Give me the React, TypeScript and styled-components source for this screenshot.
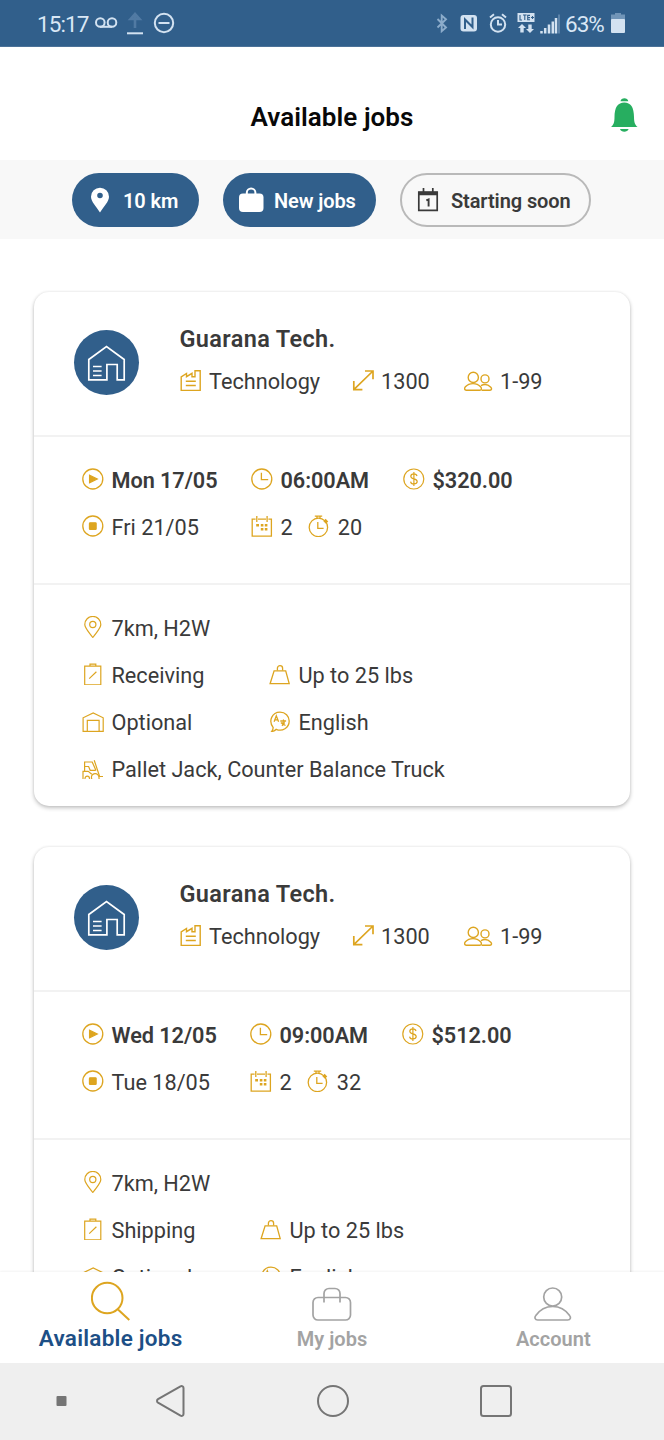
import React from 'react';
import styled, { createGlobalStyle } from 'styled-components';

const BLUE = '#315f8b';
const GOLD = '#dda520';

const GlobalStyle = createGlobalStyle`
  * { box-sizing: border-box; }
  body {
    margin: 0;
    background: #fff;
    font-family: Roboto, 'Liberation Sans', sans-serif;
    color: #3a3a3a;
  }
`;

const Screen = styled.div`
  width: 664px;
  height: 1440px;
  display: flex;
  flex-direction: column;
  overflow: hidden;
  background: #fff;
`;

const StatusBar = styled.div`
  flex: none;
  height: 47px;
  padding: 0 39px 0 37px;
  display: flex;
  align-items: center;
  justify-content: space-between;
  background: ${BLUE};
  border-bottom: 1px solid #4c7298;
  color: #d9e7f5;
  font-size: 22.5px;
`;

const StatusGroup = styled.div`
  display: flex;
  align-items: center;
  height: 46px;
`;

const StatusText = styled.span<{ $w: number; $indent?: number; $ls?: number }>`
  width: ${(p) => p.$w}px;
  line-height: 26px;
  letter-spacing: ${(p) => p.$ls ?? 0}px;
  white-space: nowrap;
  padding: 2px 0 0 ${(p) => p.$indent ?? 0}px;
`;

const Header = styled.header`
  flex: none;
  height: 113px;
  display: grid;
  grid-template-columns: 1fr auto 1fr;
  align-items: center;
  padding: 24px 25px 0 25px;
`;

const Title = styled.h1`
  grid-column: 2;
  margin: 2px 0 0;
  color: #080808;
  font-size: 26px;
  font-weight: 600;
  line-height: 32px;
  letter-spacing: 0.05px;
`;

const BellButton = styled.button`
  justify-self: end;
  border: 0;
  padding: 0;
  margin-bottom: 3px;
  background: none;
  height: 38px;
`;

const Filters = styled.div`
  flex: none;
  height: 79px;
  display: flex;
  justify-content: center;
  align-items: center;
  gap: 24px;
  padding-right: 1px;
  background: #f8f8f8;
`;

const Chip = styled.button<{ $w: number; $gap: number; $outline?: boolean }>`
  width: ${(p) => p.$w}px;
  height: 54px;
  padding: 0 0 0 ${(p) => (p.$outline ? 15 : 14)}px;
  display: flex;
  align-items: center;
  gap: ${(p) => p.$gap}px;
  border: ${(p) => (p.$outline ? '2px solid #b9b9b9' : '0')};
  border-radius: 27px;
  background: ${(p) => (p.$outline ? 'transparent' : BLUE)};
  color: ${(p) => (p.$outline ? '#3a3a3a' : '#fff')};
  font: 600 20px Roboto, sans-serif;
  letter-spacing: -0.1px;
  white-space: nowrap;
`;

const ChipLabel = styled.span`
  padding-top: 3px;
`;

const List = styled.main`
  flex: 1;
  min-height: 0;
  overflow: hidden;
  padding: 53px 34px 0;
  display: flex;
  flex-direction: column;
  gap: 41px;
`;

const Card = styled.article`
  flex: none;
  height: 514px;
  border-radius: 15px;
  background: #fff;
  box-shadow: 0 2px 4px rgba(0, 0, 0, 0.24), 0 0 3px rgba(0, 0, 0, 0.08);
`;

const Company = styled.section`
  height: 145px;
  display: flex;
  padding: 32px 0 0 40px;
  border-bottom: 2px solid #f2f2f2;
`;

const Avatar = styled.div`
  width: 65px;
  height: 65px;
  margin: 6px 40.5px 0 0;
  border-radius: 50%;
  background: ${BLUE};
`;

const CompanyName = styled.h2`
  margin: 0;
  font-size: 23.5px;
  font-weight: 600;
  line-height: 30px;
  letter-spacing: 0.35px;
`;

const Facts = styled.div<{ $cols: string }>`
  display: grid;
  grid-template-columns: ${(p) => p.$cols};
  grid-auto-rows: 47px;
`;

const CompanyFacts = styled(Facts)`
  margin-top: 4px;
`;

const Schedule = styled.section`
  height: 148px;
  padding: 20px 0 0 48px;
  border-bottom: 2px solid #f2f2f2;
`;

const Details = styled.section`
  padding: 20px 0 0 48px;
`;

const Fact = styled.div<{ $bold?: boolean; $span?: boolean }>`
  display: flex;
  align-items: center;
  gap: 7.5px;
  font-size: 21.7px;
  font-weight: ${(p) => (p.$bold ? 600 : 390)};
  letter-spacing: ${(p) => (p.$bold ? -0.06 : 0)}px;
  white-space: nowrap;
  ${(p) => p.$span && 'grid-column: 1 / -1;'}
  svg {
    margin-bottom: 3px;
  }
`;

const Pair = styled.div`
  display: flex;
  gap: 15.5px;
`;

const TabBar = styled.nav`
  flex: none;
  height: 91px;
  display: grid;
  grid-template-columns: repeat(3, 1fr);
  background: #fff;
  box-shadow: 0 -1px 2px rgba(0, 0, 0, 0.05);
  position: relative;
`;

const Tab = styled.button<{ $active?: boolean }>`
  border: 0;
  padding: ${(p) => (p.$active ? 9 : 8.5)}px 0 0;
  background: none;
  display: flex;
  flex-direction: column;
  align-items: center;
  gap: ${(p) => (p.$active ? 4 : 5.5)}px;
  color: ${(p) => (p.$active ? '#1d4f86' : '#a3a3a3')};
  font: 600 ${(p) => (p.$active ? 22.5 : 20)}px/26px Roboto, sans-serif;
  letter-spacing: ${(p) => (p.$active ? 0.25 : 0)}px;
`;

const SystemNav = styled.div`
  flex: none;
  height: 77px;
  background: #efefef;
  display: flex;
  align-items: center;
  padding: 0 0 1px 56px;
`;

const NavKey = styled.span<{ $gap: number }>`
  display: flex;
  margin-right: ${(p) => p.$gap}px;
`;

type GlyphProps = { w?: number; h?: number; stroke?: string; sw?: number; ml?: number; children: React.ReactNode };

const Svg = styled.svg<{ $ml: number }>`
  flex: none;
  display: block;
  margin-left: ${(p) => p.$ml}px;
`;

const Glyph = ({ w = 22, h = 22, stroke = GOLD, sw = 1.3, ml = 0, children }: GlyphProps) => (
  <Svg $ml={ml} width={w} height={h} viewBox={`0 0 ${w} ${h}`} fill="none" stroke={stroke} strokeWidth={sw}>
    {children}
  </Svg>
);

const FactoryIcon = () => (
  <Glyph sw={1.4}>
    <path d="M1.2 21.500V7.900L6.500 4.500v3.200L12 4.300v3.400h3V1.800h5.200V21.500z" />
    <path d="M5.800 12.300h10M5.800 16.500h10" />
  </Glyph>
);
const ExpandIcon = () => (
  <Glyph sw={1.7}>
    <path d="M1.8 20.600 21 2M13 2h8v8.200M1.800 12v8.600h8.600" />
  </Glyph>
);
const PeopleIcon = () => (
  <Glyph w={30} sw={1.4}>
    <circle cx="10.300" cy="8.400" r="5.100" />
    <path d="M3.300 21.200h13.400c2 0 2.200-2 .9-3.400-3.800-4.200-11.400-4.200-15.200 0-1.300 1.400-1 3.400.9 3.400z" />
    <circle cx="22" cy="9.900" r="4" />
    <path d="M18.600 21.200h8.400c1.800 0 2-1.800.8-3-2.600-2.600-6.600-3.300-9.800-1.600" />
  </Glyph>
);
const PlayIcon = () => (
  <Glyph>
    <circle cx="10.800" cy="11" r="10" />
    <path d="M7.600 7.200v7.600l7.600-3.800z" fill={GOLD} />
  </Glyph>
);
const StopIcon = () => (
  <Glyph>
    <circle cx="10.800" cy="11" r="10" />
    <rect x="7.500" y="7.800" width="6.600" height="6.600" rx="0.600" fill={GOLD} />
  </Glyph>
);
const ClockIcon = () => (
  <Glyph>
    <circle cx="10.800" cy="11" r="10" />
    <path d="M10.400 4.800v6.900h6.800" />
  </Glyph>
);
const MoneyIcon = () => (
  <Glyph sw={1.2}>
    <circle cx="10.800" cy="11" r="10" />
    <path d="M14 8c-.3-1.400-1.500-2.100-3.100-2.100-1.800 0-3.100.9-3.100 2.400 0 3.500 6.400 1.800 6.400 5.300 0 1.500-1.400 2.400-3.300 2.400-2 0-3.100-.8-3.300-2.400M10.900 4v14" />
  </Glyph>
);
const CalendarIcon = () => (
  <Glyph>
    <path d="M4.600 4.200H1.200v17h19.200v-17h-3M7 4.200h8M5.800 1v6M16.100 1v6" />
    <path d="M5.200 10.200h2.800M9.800 10.200h2.600M13.800 10.200h2.600M9.800 14.200h2.600M13.800 14.200h2.600" strokeWidth="2.600" />
  </Glyph>
);
const StopwatchIcon = () => (
  <Glyph>
    <circle cx="10.400" cy="12.400" r="9.200" />
    <path d="M6.800 1.200h7.400M9 1.200v2M12 1.200v2M9.800 7v6.300h5.800" />
    <path d="m16.500 5 2.600 2.600" strokeWidth="3.200" />
  </Glyph>
);
const PinIcon = () => (
  <Glyph sw={1.2}>
    <path d="M10.800 21.500C6.500 15.500 2.800 12 2.800 8.400a8 8 0 0 1 16 0c0 3.600-3.700 7.100-8 13.100z" />
    <circle cx="10.800" cy="8.500" r="3.100" />
  </Glyph>
);
const ClipboardIcon = () => (
  <Glyph sw={1.2}>
    <path d="M2.700 3.200h16.100v18.600H2.700zM8 3V1.200h5.800V3M7.200 15.600l7.200-6.800" />
  </Glyph>
);
const WeightIcon = () => (
  <Glyph>
    <path d="M5.100 7.800h11.600L20.200 20.700H1.100z" />
    <path d="M8.400 7.600V5.200a2.600 2.600 0 0 1 5.200 0v2.400" />
  </Glyph>
);
const WarehouseIcon = () => (
  <Glyph sw={1.2}>
    <path d="M1.100 21.400V7.800L11.200 3l10 4.800v13.600h-4.100V10.400H5.300v11z" />
    <path d="M5.300 21.400h11.800" />
  </Glyph>
);
const LanguageIcon = () => (
  <Glyph>
    <path d="M4.200 17.600C-1 11 3.100 2.100 11 2.100c5.300 0 9.200 4 9.200 9 0 6.800-7 10.900-13 8.200-1 1.100-2.500 2-4.600 2.300 1-1.200 1.600-2.600 1.600-4z" />
    <path d="m5.100 11.800 2.200-6 2.300 6M5.900 9.800h3M11.300 11h5.800M11.800 13h4M14.300 9.500c1.700 2.800.8 5.100-1.500 6.200M13 13.500l3.500 2" />
  </Glyph>
);
const ForkliftIcon = () => (
  <Glyph sw={1.2}>
    <path d="M2.600 14V5h7.600l3.800 8.600M1 22v-7.600h5.200l3.600 2.800M2.600 9.500h4l1.600 3.800h5.500" />
    <path d="M12.200 3.200 17.600 19.500H21" />
    <path d="M3 22.200c-.3-4 4.600-4 4.600 0M9.800 22.200c-2.400-6.800 8.200-8.200 7.200 0" />
  </Glyph>
);

const BuildingIcon = () => (
  <Glyph w={65} h={65} stroke="#fff" sw={1.7}>
    <path d="M14.800 49.800V29.500L32.500 16.500l17.700 13v20.300h-7V34.500H32.900v15.300z" />
    <path d="M19 36.500h8.600M19 41h8.600M19 45.500h8.600" />
  </Glyph>
);

const BellIcon = () => (
  <Glyph w={30} h={38} stroke="none">
    <path d="M11.500 6.300C11.800 2.100 19 2.100 19.300 6.300M11 34c1 3.600 7.600 3.600 8.600 0z" fill="#27ae60" />
    <path d="M2 32.100c2.600-2.300 3.500-4.700 3.500-10C5.500 12 9 7.400 15.300 7.400S25 12 25 22.100c0 5.300 1 7.700 3.600 10z" fill="#27ae60" />
  </Glyph>
);

type Job = {
  scheduleCols: string;
  detailCols: string;
  start: string;
  end: string;
  time: string;
  pay: string;
  days: string;
  hours: string;
  task: string;
};

const jobs: Job[] = [
  { scheduleCols: '169px 152px 1fr', detailCols: '187px 1fr', start: 'Mon 17/05', end: 'Fri 21/05', time: '06:00AM', pay: '$320.00', days: '2', hours: '20', task: 'Receiving' },
  { scheduleCols: '168px 152px 1fr', detailCols: '178px 1fr', start: 'Wed 12/05', end: 'Tue 18/05', time: '09:00AM', pay: '$512.00', days: '2', hours: '32', task: 'Shipping' },
];

const JobCard = ({ job }: { job: Job }) => (
  <Card>
    <Company>
      <Avatar><BuildingIcon /></Avatar>
      <div>
        <CompanyName>Guarana Tech.</CompanyName>
        <CompanyFacts $cols="172px 111px auto">
          <Fact><FactoryIcon />Technology</Fact>
          <Fact><ExpandIcon />1300</Fact>
          <Fact><PeopleIcon />1-99</Fact>
        </CompanyFacts>
      </div>
    </Company>
    <Schedule>
      <Facts $cols={job.scheduleCols}>
        <Fact $bold><PlayIcon />{job.start}</Fact>
        <Fact $bold><ClockIcon />{job.time}</Fact>
        <Fact $bold><MoneyIcon />{job.pay}</Fact>
        <Fact><StopIcon />{job.end}</Fact>
        <Pair>
          <Fact><CalendarIcon />{job.days}</Fact>
          <Fact><StopwatchIcon />{job.hours}</Fact>
        </Pair>
      </Facts>
    </Schedule>
    <Details>
      <Facts $cols={job.detailCols}>
        <Fact $span><PinIcon />7km, H2W</Fact>
        <Fact><ClipboardIcon />{job.task}</Fact>
        <Fact><WeightIcon />Up to 25 lbs</Fact>
        <Fact><WarehouseIcon />Optional</Fact>
        <Fact><LanguageIcon />English</Fact>
        <Fact $span><ForkliftIcon />Pallet Jack, Counter Balance Truck</Fact>
      </Facts>
    </Details>
  </Card>
);

const PALE = '#d3e2f1';

const App = () => (
  <>
    <GlobalStyle />
    <Screen>
      <StatusBar>
        <StatusGroup>
          <StatusText $w={57} $ls={-0.9}>15:17</StatusText>
          <Glyph w={24} h={22} stroke={PALE} sw={2}>
            <circle cx="6.300" cy="10.500" r="4.300" /><circle cx="18" cy="10.500" r="4.300" /><path d="M6 14.800h12" />
          </Glyph>
          <Glyph w={18} h={24} stroke={PALE} sw={2} ml={8}>
            <path d="M1 22.300h16" />
            <path d="M9 17V5M4.500 8 9 3l4.500 5z" stroke="#517aa3" strokeWidth="2.600" />
          </Glyph>
          <Glyph w={22} h={22} stroke={PALE} sw={2} ml={9}>
            <circle cx="11" cy="11" r="9.200" /><path d="M5.500 11h11" />
          </Glyph>
        </StatusGroup>
        <StatusGroup>
          <Glyph w={12} h={20} stroke="#8caccb" sw={1.9}>
            <path d="m1.500 6 8.500 8.500-4.300 3.700V2.500L10 6.200 1.500 14.500" />
          </Glyph>
          <Glyph w={18} h={18} stroke={BLUE} sw={2} ml={12}>
            <rect x="0.500" y="1" width="16.500" height="16.500" rx="3" fill={PALE} stroke="none" />
            <path d="M5 15V5.500l7.500 7.500V3.500" />
          </Glyph>
          <Glyph w={20} h={22} stroke={PALE} sw={2} ml={10}>
            <circle cx="10" cy="12.500" r="7.200" /><path d="M10 8v4.500h4M2 5.500 6 2.300M18 5.500 14 2.300" />
          </Glyph>
          <Glyph w={18} h={22} stroke={BLUE} sw={1.1} ml={9}>
            <rect x="0.500" y="1" width="17" height="9" fill={PALE} stroke="none" />
            <path d="M3 3v5h2M6 3h3.600M7.800 3v5M13 3.400h-2.300v4.400H13M10.700 5.600H13M14 5.500h3M15.500 4v3" />
            <path d="m1 16 4-4 4 4H6.700v4.500H3.300V16zm8 1h2.300v-4.500h3.400V17H17l-4 4z" fill={PALE} stroke="none" />
          </Glyph>
          <Glyph w={20} h={22} stroke={PALE} sw={2.5} ml={5.5}>
            <path d="M1.500 21.500v-2.500M5.200 21.500v-5.500M9 21.500v-9M12.800 21.500v-12" />
            <path d="M16 21.500V6" />
            <path d="M19 21.500V2.500" stroke="#6388ad" strokeWidth="1.800" />
          </Glyph>
          <StatusText $w={51} $indent={5} $ls={-1}>63%</StatusText>
          <Glyph w={14} h={22} stroke="none">
            <path d="M0 2.500h4V1h6v1.500h4V8H0z" fill="#7195b8" />
            <rect y="7" width="14" height="14" rx="1" fill={PALE} />
          </Glyph>
        </StatusGroup>
      </StatusBar>

      <Header>
        <Title>Available jobs</Title>
        <BellButton aria-label="Notifications"><BellIcon /></BellButton>
      </Header>

      <Filters>
        <Chip $w={127} $gap={9}>
          <Glyph w={28} h={28} stroke="none">
            <path fillRule="evenodd" d="M14 26.500C10 20 5 15.500 5 10.700a9 9 0 0 1 18 0C23 15.500 18 20 14 26.500zM14 12.300a2.800 2.800 0 1 0 0-5.600 2.800 2.800 0 0 0 0 5.600z" fill="#fff" />
          </Glyph>
          <ChipLabel>10 km</ChipLabel>
        </Chip>
        <Chip $w={153} $gap={9}>
          <Glyph w={28} h={28} stroke="#fff" sw={2}>
            <rect x="2" y="7.500" width="24.500" height="18.500" rx="4" fill="#fff" stroke="none" />
            <path d="M9.800 10V6.800a4.300 4.300 0 0 1 8.600 0V10" />
          </Glyph>
          <ChipLabel>New jobs</ChipLabel>
        </Chip>
        <Chip $w={191} $gap={12} $outline>
          <Glyph w={22} h={28} stroke="#3a3a3a" sw={1.7}>
            <path d="M1.800 6.200h18.400v18.200H1.800zM6.500 2v5M15.800 2v5" />
            <path d="M1.500 7.500h19" strokeWidth="3.500" />
            <path d="M9.300 14.400l2.300-1v7" strokeWidth="1.900" />
          </Glyph>
          <ChipLabel>Starting soon</ChipLabel>
        </Chip>
      </Filters>

      <List>
        {jobs.map((job) => <JobCard key={job.start} job={job} />)}
      </List>

      <TabBar>
        <Tab $active>
          <Glyph w={40} h={40} stroke={GOLD} sw={2}>
            <circle cx="16.200" cy="17" r="15.300" /><path d="m27 28.500 11.300 10.500" />
          </Glyph>
          Available jobs
        </Tab>
        <Tab>
          <Glyph w={40} h={40} stroke="#a3a3a3" sw={1.7}>
            <rect x="1" y="16.500" width="37.500" height="22.500" rx="5" />
            <path d="M12 21.500V12.500a5 5 0 0 1 5-5h6a5 5 0 0 1 5 5v9" />
          </Glyph>
          My jobs
        </Tab>
        <Tab>
          <Glyph w={40} h={40} stroke="#a3a3a3" sw={1.7}>
            <circle cx="19.700" cy="16" r="9" />
            <path d="M4.700 39h30c2.700 0 3.600-2.600 1.900-4.500-8.500-12-25.300-12-33.800 0C1.100 36.400 2 39 4.700 39z" />
          </Glyph>
          Account
        </Tab>
      </TabBar>

      <SystemNav>
        <NavKey $gap={88}>
          <Glyph w={12} h={12} stroke="none"><rect x="0.500" y="1" width="10" height="10" rx="1" fill="#757575" /></Glyph>
        </NavKey>
        <NavKey $gap={130}>
          <Glyph w={30} h={34} stroke="#757575" sw={2}>
            <path d="M24.500 2.300 2 15.200c-1.300.8-1.300 2.700 0 3.500l22.500 13c1.500.8 3-.2 3-1.700V4c0-1.500-1.500-2.500-3-1.700z" />
          </Glyph>
        </NavKey>
        <NavKey $gap={129}>
          <Glyph w={34} h={34} stroke="#757575" sw={2}><circle cx="17" cy="17" r="15" /></Glyph>
        </NavKey>
        <NavKey $gap={0}>
          <Glyph w={34} h={34} stroke="#757575" sw={2}><rect x="2" y="2" width="30" height="30" rx="2.500" /></Glyph>
        </NavKey>
      </SystemNav>
    </Screen>
  </>
);

export default App;
